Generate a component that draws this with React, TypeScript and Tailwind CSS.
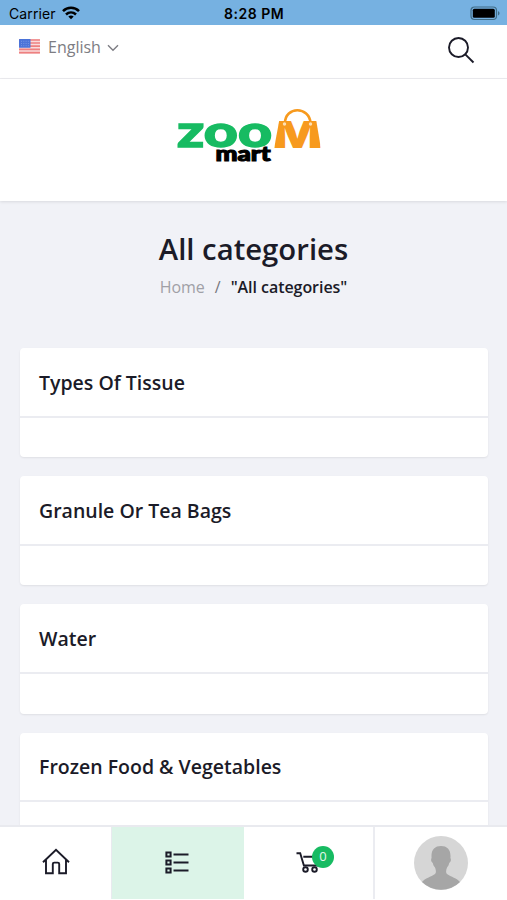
const categories = ["Types Of Tissue", "Granule Or Tea Bags", "Water", "Frozen Food & Vegetables"];

function StatusBar() {
  return (
    <div className="relative flex h-[25px] shrink-0 items-center justify-between bg-[#76b1e1] pt-[3px] pr-[6px] pl-[9px] font-['Inter',sans-serif] text-black">
      <div className="flex items-center gap-[6px]">
        <span className="text-[14px] leading-none tracking-[0.1px]">Carrier</span>
        <svg className="-mt-[2px]" width="18" height="14" viewBox="0 0 18 14" fill="none" stroke="#000" strokeWidth="2.500">
          <path d="M1 5.200C5.400 .7 12.600 .7 17 5.200" />
          <path d="M4 8.500c2.900-2.800 7.100-2.800 10 0" />
          <path d="M6.300 10.500c1.600-1.400 3.800-1.400 5.400 0L9 13.300z" fill="#000" stroke="none" />
        </svg>
      </div>
      <span className="absolute left-[224px] text-[14px] leading-none font-semibold tracking-[0.5px]">8:28 PM</span>
      <svg className="-mt-[2px]" width="31" height="15" viewBox="0 0 31 15">
        <rect x="1" y="1" width="25.500" height="12.500" rx="3.500" fill="none" stroke="#416d87" strokeWidth="1.200" />
        <rect x="2.800" y="2.800" width="22" height="9" rx="1.500" fill="#000" />
        <path d="M28 5.200c2 .7 2 3.500 0 4.200z" fill="#416d87" />
      </svg>
    </div>
  );
}

function Flag() {
  return (
    <svg width="21" height="15" viewBox="0 0 21 15">
      <rect width="21" height="15" rx="1" fill="#f9dcdc" />
      <path d="M0 1h21M0 4h21M0 7.200h21M0 10.400h21M0 13.700h21" stroke="#ee8080" strokeWidth="1.700" />
      <rect width="11.500" height="8.800" rx="0.500" fill="#4b73d8" />
      <path d="M2 2.300h8M2 4.500h8M2 6.700h8" stroke="#809de6" strokeWidth="0.800" strokeDasharray="1 1.300" />
    </svg>
  );
}

function Logo() {
  return (
    <svg className="overflow-visible" width="146" height="56" viewBox="0 0 146 56">
      {/* the M is tapered towards the top like a shopping bag */}
      <clipPath id="bag">
        <path d="M104.500 12h36.500l5 30H99z" />
      </clipPath>
      <text x="2" y="40" fontFamily="Lato" fontWeight="900" fontSize="44" fill="#17bb62" stroke="#17bb62" strokeWidth="1.400" textLength="95" lengthAdjust="spacingAndGlyphs">
        zoo
      </text>
      <g clipPath="url(#bag)">
        <text x="97" y="40.500" fontFamily="Inter" fontWeight="900" fontSize="37" fill="#f79a1e" textLength="51" lengthAdjust="spacingAndGlyphs">
          M
        </text>
      </g>
      <path d="M110 16C110 -1 134.500 -1 135.500 16" fill="none" stroke="#f79a1e" strokeWidth="2.600" />
      <circle cx="109.500" cy="17" r="1.700" fill="#fde0b5" />
      <circle cx="135.500" cy="17" r="1.700" fill="#fde0b5" />
      <text x="40.500" y="53.500" fontFamily="Lato" fontWeight="900" fontSize="21" fill="#000" stroke="#000" strokeWidth="1.100" textLength="55" lengthAdjust="spacingAndGlyphs">
        mart
      </text>
    </svg>
  );
}

function BottomNav() {
  return (
    <nav className="absolute inset-x-0 bottom-0 flex h-[75px] border-t-2 border-[#e9eaef] bg-white pb-px text-[#1b1b28]">
      <a className="flex w-[111px] items-center justify-center pb-[3px]">
        <svg width="28" height="27" viewBox="0 0 28 27" fill="none" stroke="currentColor" strokeWidth="1.900">
          <path d="M1 14.300 14 1.800l13 12.500M4 12v13.300h6.800V16c0-1 .4-1.400 1.400-1.400h3.600c1 0 1.400.4 1.400 1.400v9.300H24V12" />
        </svg>
      </a>
      <a className="flex w-[133px] items-center justify-center border-l border-[#e9eaef] bg-[#dcf4e8] pr-[2px] pb-[2px]">
        <svg width="24" height="23" viewBox="0 0 24 23" fill="none" stroke="currentColor" strokeWidth="2">
          <path d="M1.400 1.400h4.200v4.200H1.400zM1.400 9.400h4.200v4.200H1.400zM1.400 17.400h4.200v4.200H1.400zM8.500 3.500h15M8.500 11.500h15M8.500 19.500h15" />
        </svg>
      </a>
      <a className="relative flex w-[131px] items-center border-r-2 border-[#ebecf1] pb-px pl-[52px]">
        <svg width="24" height="21" viewBox="0 0 24 21" fill="none" stroke="currentColor" strokeWidth="1.900">
          <path d="M.5 1.200h3.700l3.700 12.300h13.500l1.800-8.800H7.300" />
          <circle cx="9.500" cy="17.500" r="2.300" />
          <circle cx="18.500" cy="17.500" r="2.300" />
        </svg>
        <span className="absolute top-[19px] left-[68px] flex size-[22px] items-center justify-center rounded-full bg-[#17bb62] text-[13px] text-[#e3f7ec]">0</span>
      </a>
      <a className="flex flex-1 items-center justify-center">
        <svg width="54" height="54" viewBox="0 0 54 54">
          <circle cx="27" cy="27" r="27" fill="#d6d6d6" />
          <path d="M8 46c3-4 9-5 13-8 1.500-1.200 1-4.500-.3-7-1-1-1.700-2.500-1.900-4-2-1-2-4-1.200-5-.8-8 3-12 9.400-12s10.200 4 9.400 12c.8 1 .8 4-1.200 5-.2 1.500-.9 3-1.900 4-1.300 2.500-1.800 5.800-.3 7 4 3 10 4 13 8a27 27 0 0 1-38 0z" fill="#a6a6a6" />
        </svg>
      </a>
    </nav>
  );
}

export default function App() {
  return (
    <div className="relative flex h-[900px] w-[507px] flex-col overflow-hidden bg-[#f1f2f7] font-['Open_Sans',sans-serif] text-[#1b1b28]">
      <StatusBar />

      <div className="flex h-[54px] shrink-0 items-center justify-between border-b border-[#ececf0] bg-white pr-[32px] pb-[3px] pl-[19px]">
        <div className="flex items-center pb-[7px] text-[#7d7d83]">
          <Flag />
          <span className="ml-[8px] text-[16px] leading-6">English</span>
          <svg className="mt-[2px] ml-[6px]" width="12" height="8" viewBox="0 0 12 8" fill="none" stroke="currentColor" strokeWidth="1.400">
            <path d="m1 1.200 5 5 5-5" />
          </svg>
        </div>
        <svg width="28" height="28" viewBox="0 0 28 28" fill="none" stroke="#1b1b28" strokeWidth="1.900">
          <circle cx="11.500" cy="11.500" r="9.500" />
          <path d="m18.300 18.300 8.200 8.200" />
        </svg>
      </div>

      <header className="flex h-[122px] shrink-0 justify-center bg-white pt-[28px] pr-[12px] shadow-[0_1px_3px_rgba(0,0,0,0.1)]">
        <Logo />
      </header>

      <div className="flex h-[147px] shrink-0 flex-col items-center pt-[28px]">
        <h1 className="text-[29.300px] leading-10 font-semibold">All categories</h1>
        <div className="mt-[6px] flex text-[16px] leading-6 tracking-[-0.05px]">
          <span className="text-[#a0a0a6]">Home</span>
          <span className="mx-[10px] text-[#77777d]">/</span>
          <span className="font-semibold">"All categories"</span>
        </div>
      </div>

      <main className="flex flex-col gap-[19px] px-[19.500px]">
        {categories.map((name) => (
          <section key={name} className="h-[109.200px] shrink-0 rounded bg-white shadow-[0_1px_2px_rgba(0,0,0,0.08)]">
            <h2 className="h-[69.500px] border-b-2 border-[#ebecf1] pt-[20.700px] pl-[19.500px] text-[19.500px] leading-[28px] font-semibold">{name}</h2>
          </section>
        ))}
      </main>

      <BottomNav />
    </div>
  );
}
